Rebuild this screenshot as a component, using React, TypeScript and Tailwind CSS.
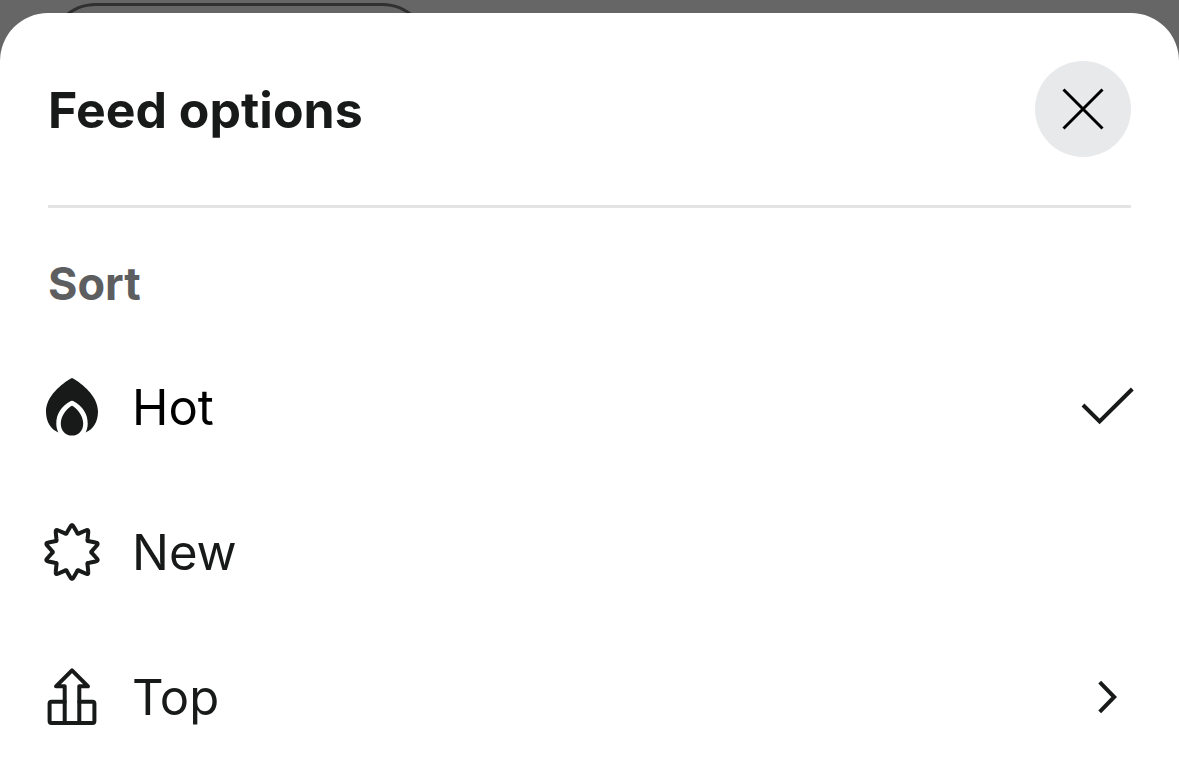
import { useState, type ReactNode } from "react";

function starPath(): string {
  const at = (radius: number, degrees: number) => {
    const a = (degrees * Math.PI) / 180;
    return `${(30 + radius * Math.sin(a)).toFixed(2)} ${(30 - radius * Math.cos(a)).toFixed(2)}`;
  };
  let d = "";
  for (let i = 0; i < 10; i++) {
    const tip = i * 36;
    d += `${i === 0 ? "M" : "L"}${at(25.4, tip - 3.8)}Q${at(28.6, tip)} ${at(25.4, tip + 3.8)}`;
    d += `L${at(20.3, tip + 14)}Q${at(18, tip + 18)} ${at(20.3, tip + 22)}`;
  }
  return d + "Z";
}

function Icon({ children }: { children: ReactNode }) {
  return (
    <svg
      viewBox="0 0 60 60"
      className="size-[60px] shrink-0"
      fill="none"
      stroke="currentColor"
      strokeWidth="4"
      strokeLinecap="round"
      strokeLinejoin="round"
      aria-hidden="true"
    >
      {children}
    </svg>
  );
}

const HotIcon = () => (
  <Icon>
    <g fill="currentColor" stroke="none">
      <path d="M28.9 1.4Q30 .7 31.1 1.4C40 6.5 56 19 56 34.5C56 45 51 52.5 43.6 55.4C45 53 45.7 50 45.7 46.5C45.7 37 40.5 29 31.2 24.1Q30 23.5 28.8 24.1C19.5 29 14.3 37 14.3 46.5C14.3 50 15 53 16.4 55.4C9 52.5 4 45 4 34.5C4 19 20 6.5 28.9 1.4Z" />
      <path d="M29 29.2Q30 28.3 31 29.2C36.5 33 41.2 39.5 41.2 46.5C41.2 54 36.5 58.6 30 58.6C23.5 58.6 18.8 54 18.8 46.5C18.8 39.5 23.5 33 29 29.2Z" />
    </g>
  </Icon>
);

const NewIcon = () => (
  <Icon>
    <path d={starPath()} />
  </Icon>
);

const TopIcon = () => (
  <Icon>
    <path d="M22.7 56V19.3H14L30 3.3L46 19.3H37.3V56" />
    <path d="M22.7 34.7H9.5Q7.6 34.7 7.6 36.6V54Q7.6 56 9.5 56H50.5Q52.4 56 52.4 54V36.6Q52.4 34.7 50.5 34.7H37.3" />
  </Icon>
);

const CheckIcon = () => (
  <Icon>
    <path d="M6 28L22.6 44.4L55.3 12" strokeLinecap="butt" strokeLinejoin="miter" />
  </Icon>
);

const ChevronIcon = () => (
  <Icon>
    <path d="M22.7 15.2L37.2 30L22.7 44.8" strokeLinecap="butt" strokeLinejoin="miter" />
  </Icon>
);

const options = [
  { name: "Hot", icon: <HotIcon />, submenu: false },
  { name: "New", icon: <NewIcon />, submenu: false },
  { name: "Top", icon: <TopIcon />, submenu: true },
];

export default function App() {
  const [sort, setSort] = useState("Hot");

  return (
    <div className="relative flex min-h-screen flex-col overflow-hidden bg-[#666666] pt-[13px] font-['Inter',sans-serif] text-[#181919]">
      <div className="absolute left-12 top-[3px] h-24 w-[382px] rounded-full border-3 border-[#303030]" aria-hidden="true" />
      <main role="dialog" aria-labelledby="sheet-title" className="relative grow rounded-t-[48px] bg-white">
        <header className="mx-12 flex items-center justify-between border-b-3 border-[#e4e4e4] py-12">
          <h1 id="sheet-title" className="pt-0.5 text-[50px] leading-[60px] font-bold">
            Feed options
          </h1>
          <button type="button" aria-label="Close" className="flex size-24 items-center justify-center rounded-full bg-[#e8e9eb] text-black">
            <svg viewBox="0 0 42 42" className="size-[42px]" stroke="currentColor" strokeWidth="3" strokeLinecap="butt" aria-hidden="true">
              <path d="M1.5 1.5L40.5 40.5M40.5 1.5L1.5 40.5" />
            </svg>
          </button>
        </header>
        <section aria-labelledby="sort-title">
          <h2 id="sort-title" className="px-12 pt-12 pb-[23px] text-[45px] leading-[55px] font-bold text-[#5c5e60]">
            Sort
          </h2>
          <ul>
            {options.map(({ name, icon, submenu }) => (
              <li key={name}>
                <button
                  type="button"
                  onClick={() => setSort(name)}
                  className="flex h-[145px] w-full items-center gap-[30px] px-[42px] text-left text-[49px] leading-[60px]"
                >
                  {icon}
                  <span className={sort === name ? "grow pt-0.5 text-black" : "grow pt-0.5"}>{name}</span>
                  {submenu ? <ChevronIcon /> : sort === name ? <CheckIcon /> : null}
                </button>
              </li>
            ))}
          </ul>
        </section>
      </main>
    </div>
  );
}
